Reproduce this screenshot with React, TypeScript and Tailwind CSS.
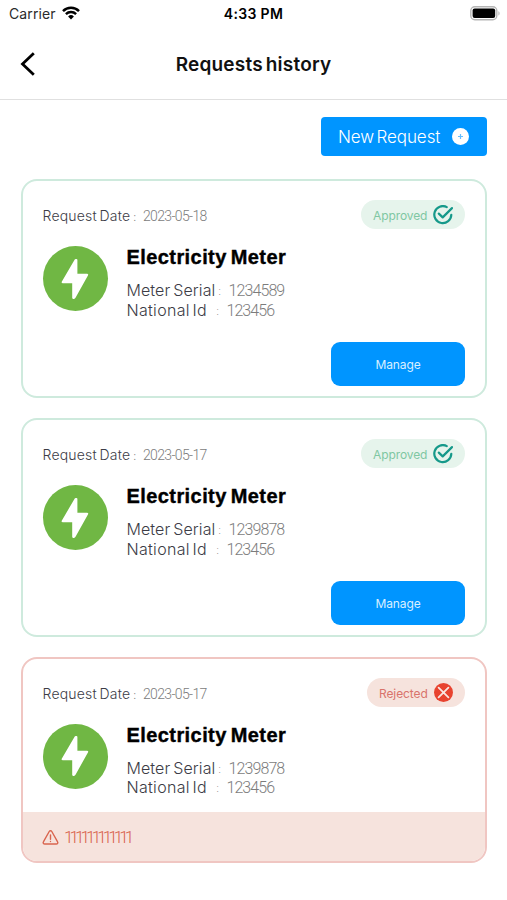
import clsx from "clsx";

interface MeterRequest {
    date: string;
    serial: string;
    nationalId: string;
    status: "approved" | "rejected";
    reason?: string;
}

const requests: MeterRequest[] = [
    { date: "2023-05-18", serial: "1234589", nationalId: "123456", status: "approved" },
    { date: "2023-05-17", serial: "1239878", nationalId: "123456", status: "approved" },
    {
        date: "2023-05-17",
        serial: "1239878",
        nationalId: "123456",
        status: "rejected",
        reason: "111111111111",
    },
];

function StatusBar() {
    return (
        <div className="relative flex h-7 items-center justify-between pl-[9px] pr-[6px] text-black">
            <div className="flex items-center gap-[6px]">
                <span className="font-['Inter',sans-serif] text-[14px] leading-7 tracking-[0.1px] text-[#2b2b2b]">
                    Carrier
                </span>
                <svg width="18" height="14" viewBox="0 0 18 14" fill="none" stroke="#000" className="-mt-0.5">
                    <path d="M1 5.1a11.3 11.3 0 0 1 16 0" strokeWidth="2.5" />
                    <path d="M3.9 8.1a7.2 7.2 0 0 1 10.2 0" strokeWidth="2.4" />
                    <path d="M9 13.4 6.1 10.4a4.1 4.1 0 0 1 5.8 0z" fill="#000" stroke="none" />
                </svg>
            </div>
            <span className="absolute left-1/2 top-[3px] -translate-x-1/2 whitespace-nowrap font-['Inter',sans-serif] text-[14px] font-semibold leading-[21px] tracking-[0.35px]">
                4:33 PM
            </span>
            <svg width="31" height="15" viewBox="0 0 31 15" className="-mt-px">
                <rect x="0.8" y="0.8" width="26" height="13" rx="4" fill="#fff" stroke="#b5b5b5" strokeWidth="1.4" />
                <rect x="2.6" y="2.6" width="22.6" height="9.4" rx="2" fill="#000" />
                <path d="M28.4 5.2v4.4c1.6-.6 1.6-3.8 0-4.4z" fill="#b5b5b5" />
            </svg>
        </div>
    );
}

function StatusPill({ status }: { status: MeterRequest["status"] }) {
    const approved = status === "approved";

    return (
        <div
            className={clsx(
                "flex h-[29px] items-center justify-between rounded-full pl-3 pr-3 font-['Inter',sans-serif] text-[12px]",
                approved ? "w-[104px] bg-[#e6f4ec] text-[#7fc7a2]" : "w-[98px] bg-[#f6e3dd] text-[#d9736b]"
            )}
        >
            <span className="pt-0.5 tracking-[-0.1px]">{approved ? "Approved" : "Rejected"}</span>
            {approved ? (
                <svg width="20" height="20" viewBox="0 0 20 20" fill="none" stroke="#16998a" strokeWidth="2.2">
                    <path d="M13.8 2.1A8.5 8.5 0 1 0 18.3 9.8" strokeLinecap="round" />
                    <path d="m5.8 8.6 3.9 3.8L19 3.1" strokeLinecap="round" strokeLinejoin="round" />
                </svg>
            ) : (
                <svg width="19" height="19" viewBox="0 0 19 19">
                    <circle cx="9.5" cy="9.5" r="9.5" fill="#e8432f" />
                    <path d="m4.6 4.6 9.8 9.8m0-9.8-9.8 9.8" stroke="#fae5e0" strokeWidth="1.8" strokeLinecap="round" />
                </svg>
            )}
        </div>
    );
}

function RequestCard({ request }: { request: MeterRequest }) {
    const approved = request.status === "approved";

    return (
        <article
            className={clsx(
                "overflow-hidden rounded-[16px] border-2 bg-white",
                approved ? "h-[219px] border-[#ceeadd]" : "h-[206px] border-[#f0c6c2]"
            )}
        >
            <div className="pl-[19.5px] pr-5 pt-[19px]">
                {/* Date and status */}
                <div className="flex h-[29px] items-center justify-between">
                    <div className="flex items-center whitespace-nowrap pt-0.5">
                        <span className="w-[90px] font-['Inter',sans-serif] text-[14px] font-light tracking-[0.2px] [word-spacing:-1.5px] text-[#3c3c46]">
                            Request Date
                        </span>
                        <span className="w-[10.5px] pl-px pt-[3px] font-['Roboto',sans-serif] text-[10px] text-[#808080]">:</span>
                        <span className="pt-px font-['Roboto',sans-serif] text-[14px] font-light tracking-[-0.65px] text-[#7c7c7c]">
                            {request.date}
                        </span>
                    </div>
                    <StatusPill status={request.status} />
                </div>

                {/* Meter details */}
                <div className={clsx("flex gap-[19px]", approved ? "mt-[17px] h-[96px]" : "mt-[16.5px] h-[88.5px]")}>
                    <div className="flex size-[65px] shrink-0 items-center justify-center rounded-full bg-[#70b744]">
                        <svg width="28" height="42" viewBox="0 0 28 42" fill="#fff" stroke="#fff" strokeWidth="2" strokeLinejoin="round">
                            <path d="M14.6 2 1.6 24.2H12.2V39.8q.7.4 1.3-.4L26.2 16.8H15.4V2z" />
                        </svg>
                    </div>
                    <div className="whitespace-nowrap">
                        <h2 className="font-['Liberation_Sans',sans-serif] text-[20px] font-bold leading-[22px] tracking-[0.42px] [word-spacing:-2px] text-black [-webkit-text-stroke:0.4px_#000]">
                            Electricity Meter
                        </h2>
                        <div className="mt-[13px] font-['Inter',sans-serif] text-[16px] font-light leading-[19.5px] text-[#3c3c46]">
                            <div className="flex">
                                <span className="w-[92px] tracking-[0.08px] [word-spacing:-1.5px]">Meter Serial</span>
                                <span className="w-[10px] pt-0.5 font-['Roboto',sans-serif] text-[11px] leading-[17px] text-[#808080]">:</span>
                                <span className="font-['Roboto',sans-serif] tracking-[-0.9px] text-[#7c7c7c]">
                                    {request.serial}
                                </span>
                            </div>
                            <div className="flex">
                                <span className="w-[90px] tracking-[0.3px] [word-spacing:-2px]">National Id</span>
                                <span className="w-[10px] pt-0.5 font-['Roboto',sans-serif] text-[11px] leading-[17px] text-[#808080]">:</span>
                                <span className="font-['Roboto',sans-serif] tracking-[-0.95px] text-[#7c7c7c]">
                                    {request.nationalId}
                                </span>
                            </div>
                        </div>
                    </div>
                </div>

                {approved && (
                    <button className="ml-auto block h-11 w-[134px] rounded-[9px] bg-[#0095ff] pt-px font-['Inter',sans-serif] text-[12px] tracking-[-0.1px] text-[#d9efff]">
                        Manage
                    </button>
                )}
            </div>

            {/* Rejection reason */}
            {request.reason && (
                <div className="flex h-[50px] items-center gap-[5px] bg-[#f6e3dd] pl-[19px] pr-5 text-[#d9654f]">
                    <svg width="17" height="15" viewBox="0 0 16 15" fill="none" stroke="currentColor" strokeWidth="1.4" strokeLinecap="round" strokeLinejoin="round">
                        <path d="M6.7 1.5.9 11.8c-.6 1 .1 2.2 1.3 2.2h11.6c1.2 0 1.9-1.2 1.3-2.2L9.3 1.5c-.6-1-2-1-2.6 0z" />
                        <path d="M8 5v4.2M8 11.5v.1" />
                    </svg>
                    <span className="pt-px font-['Roboto',sans-serif] text-[17px] font-light tracking-[-3.9px]">
                        {request.reason}
                    </span>
                </div>
            )}
        </article>
    );
}

export default function App() {
    return (
        <div className="h-[900px] w-[507px] overflow-hidden bg-white">
            <StatusBar />

            <header className="grid h-[72px] grid-cols-[60px_1fr_60px] items-center border-b border-[#e0e0e0]">
                <button className="pl-5" aria-label="Back">
                    <svg width="16" height="24" viewBox="0 0 16 24" fill="none" stroke="#000" strokeWidth="2.8">
                        <path d="M13.8 1.2 2.5 12l11.3 10.8" />
                    </svg>
                </button>
                <h1 className="pt-[3px] text-center font-['Inter',sans-serif] text-[19px] font-semibold tracking-[0.2px] [word-spacing:-2px] text-[#111]">
                    Requests history
                </h1>
            </header>

            <main className="pl-[21px] pr-5 pt-[17px]">
                <button className="ml-auto flex h-[39px] w-[166px] items-center justify-between rounded-[4px] bg-[#0095ff] pl-[17px] pr-[18px] font-['Inter',sans-serif] text-[17px] font-light text-white">
                    <span className="whitespace-nowrap pt-0.5 tracking-[-0.05px] [word-spacing:-2.5px]">New Request</span>
                    <svg width="17" height="17" viewBox="0 0 17 17">
                        <circle cx="8.5" cy="8.5" r="8.5" fill="#fff" />
                        <path d="M8.5 6v5M6 8.5h5" stroke="#65bdff" strokeWidth="1.2" />
                    </svg>
                </button>

                <div className="mt-[23px] flex flex-col gap-5">
                    {requests.map((request, index) => (
                        <RequestCard key={index} request={request} />
                    ))}
                </div>
            </main>
        </div>
    );
}
